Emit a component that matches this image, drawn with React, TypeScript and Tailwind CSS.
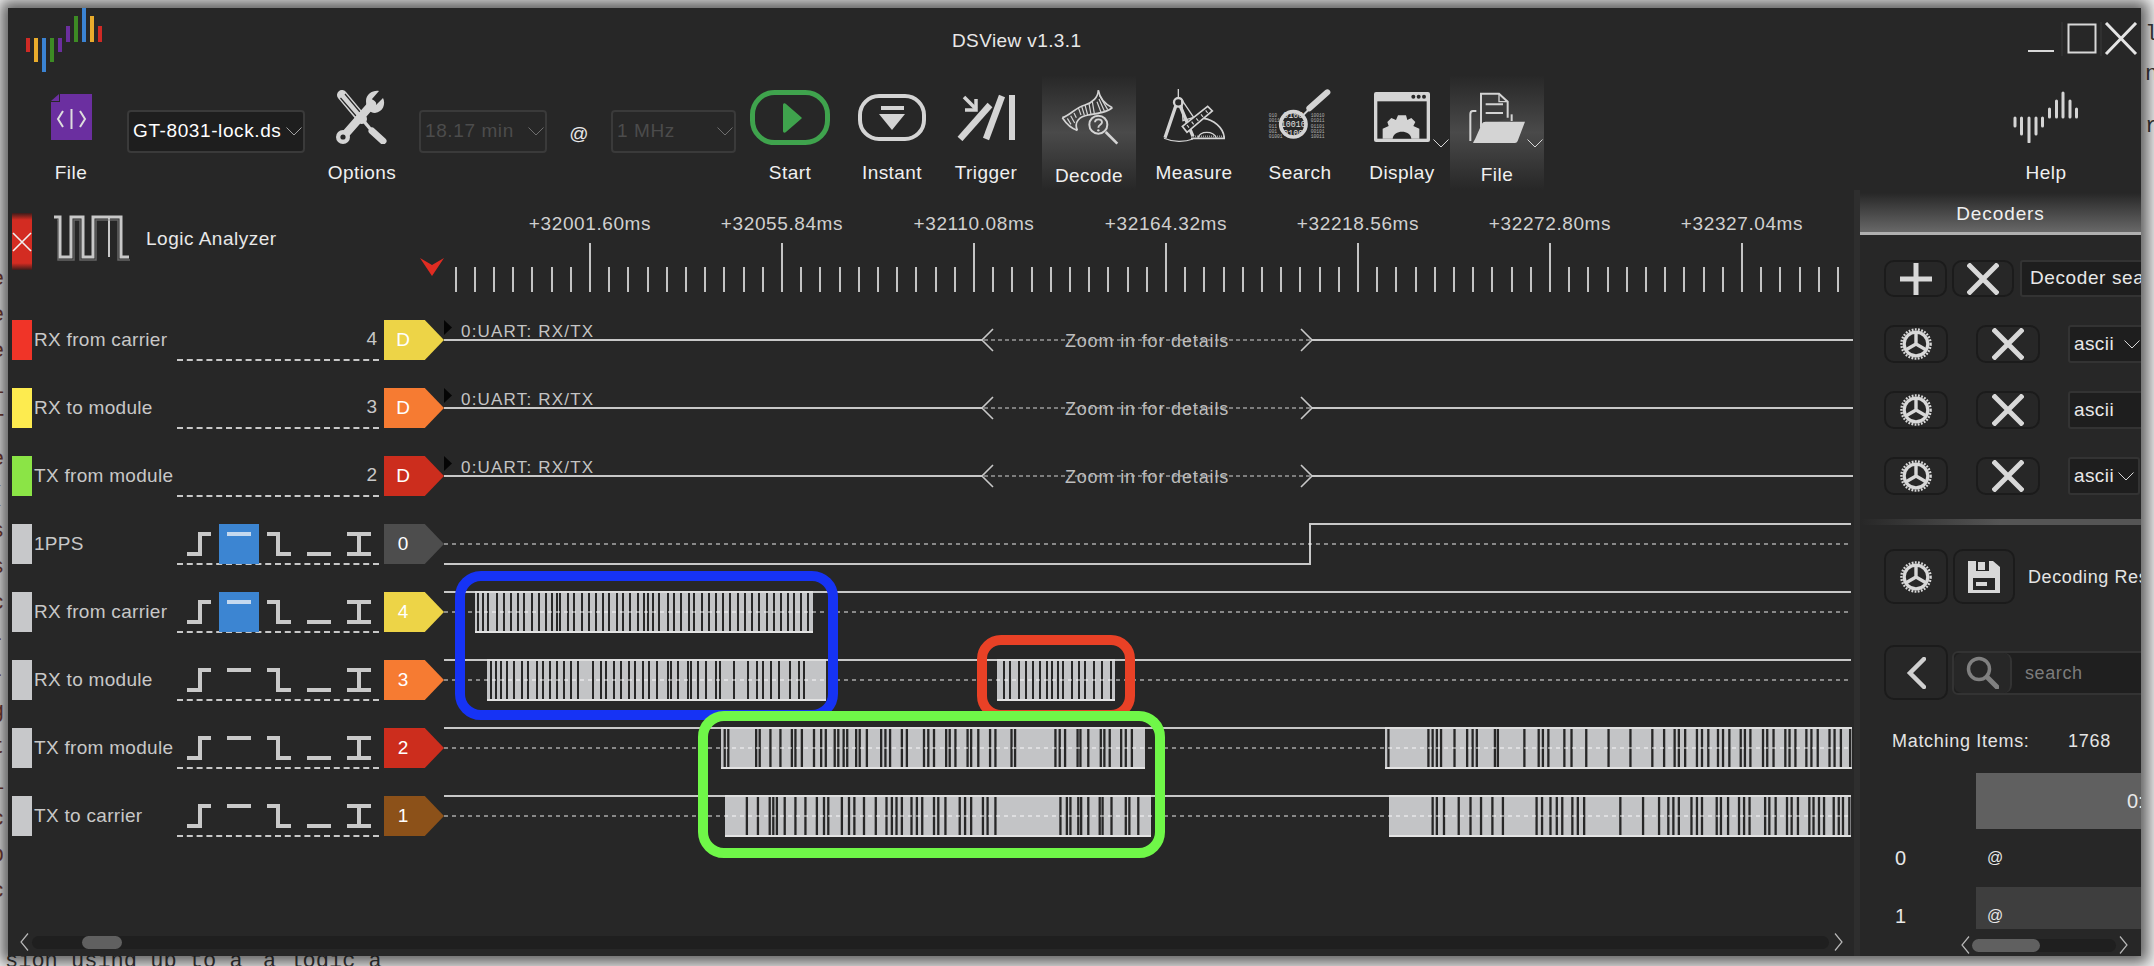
import React from "react";

const Z = (x0: number, s: number, a: number[]) => a.map((v) => x0 + v / s);

type Burst = { a: number; b: number; gaps: number[]; gw: number };
const b = (x0: number, s: number, a: number, e: number, g: number[], gw = 2): Burst => ({
  a: x0 + a / s,
  b: x0 + e / s,
  gaps: Z(x0, s, g),
  gw,
});

const R5 = [b(470, 3, 15, 1029, [22,37,52,77,100,120,140,160,182,203,225,243,257,268,290,310,333,353,375,395,415,437,457,478,500,520,532,545,565,590,610,630,653,670,692,713,735,755,778,800,822,843,865,887,908,930,950,970,990,1010])];
const R6 = [
  b(470, 3, 50, 1067, [60,75,90,107,130,152,172,197,215,238,258,280,300,322,365,390,405,430,450,475,493,515,535,558,590,600,622,650,660,682,705,735,748,790,832,858,875,900,925,958,985,1000]),
  b(680, 2.8, 888, 1218, [905,920,945,965,985,1005,1025,1040,1055,1070,1095,1115,1130,1155,1180,1205]),
];
const R7 = [
  b(680, 2.8, 115, 1302, [122,132,210,220,250,278,310,320,338,372,392,405,430,440,455,465,490,500,520,560,572,585,618,632,680,692,708,742,752,768,802,812,832,865,880,925,935,1048,1060,1075,1110,1118,1140,1175,1185,1200,1232,1245,1262], 2.3),
  b(1200, 2.376, 440, 1550, [445,540,550,560,570,602,632,645,655,698,705,768,802,812,825,863,880,915,968,1020,1072,1100,1125,1135,1150,1178,1190,1205,1228,1240,1255,1282,1292,1305,1335,1345,1360,1388,1398,1412,1438,1450,1465,1493,1505,1520,1542], 2.3),
];
const R8 = [
  b(680, 2.8, 126, 1320, [184,215,248,258,268,290,320,348,380,400,412,450,470,485,512,545,575,590,603,618,645,660,675,708,720,740,780,795,812,845,858,880,1062,1080,1090,1112,1120,1140,1172,1180,1205,1245,1255,1280], 2.3),
  b(1200, 2.376, 449, 1546, [550,560,577,612,640,665,692,717,797,810,830,845,858,882,895,910,996,1050,1088,1110,1122,1135,1165,1178,1190,1225,1235,1252,1278,1290,1303,1340,1350,1365,1392,1403,1418,1445,1455,1468,1480,1503,1515,1525,1540], 2.3),
];

const OFF = 444;
const LINE = "#c8c8c8";

function LogicWave({ bursts }: { bursts: Burst[] }) {
  const segs: [number, number][] = [];
  let p = 444;
  bursts.forEach((k) => {
    segs.push([p, k.a]);
    p = k.b;
  });
  segs.push([p, 1851]);
  return (
    <svg className="block h-[68px] w-full overflow-visible" viewBox="0 0 1410 68">
      {segs.map(([s, e], i) => (
        <rect key={i} x={s - OFF} y={-1} width={e - s} height={2} fill={LINE} shapeRendering="crispEdges" />
      ))}
      {bursts.map((k, i) => (
        <g key={i}>
          <rect x={k.a - OFF} y={0} width={k.b - k.a} height={40} fill="#c3c4c6" shapeRendering="crispEdges" />
          {k.gaps.map((g, j) => (
            <rect key={j} x={k.gw === 2 ? Math.round(g - OFF) : g - OFF} y={1} width={k.gw} height={38} fill="#272727" />
          ))}
          <rect x={k.a - OFF} y={-1} width={k.b - k.a} height={2} fill="#dedede" shapeRendering="crispEdges" />
          <rect x={k.a - OFF} y={39} width={k.b - k.a} height={2} fill="#e2e2e2" shapeRendering="crispEdges" />
        </g>
      ))}
      <line x1={0} x2={1407} y1={20} y2={20} stroke="rgba(255,255,255,0.45)" strokeWidth={2} strokeDasharray="4 4" shapeRendering="crispEdges" />
    </svg>
  );
}

function DecoderWave() {
  return (
    <svg className="block h-[68px] w-full overflow-visible" viewBox="0 0 1410 68">
      <polygon points="0,0 8,7.5 0,15" fill="#050505" />
      <g shapeRendering="crispEdges">
        <rect x={0} y={19} width={538} height={2} fill={LINE} />
        <rect x={868} y={19} width={541} height={2} fill={LINE} />
      </g>
      <line x1={540} x2={866} y1={20} y2={20} stroke="#9a9a9a" strokeWidth={1.5} strokeDasharray="4 3" />
      <path d="M549 9 L538 20 L549 31 M857 9 L868 20 L857 31" fill="none" stroke="#c8c8c8" strokeWidth={1.6} />
      <text x={17} y={17} fontSize={17} fill="#c4c4c4" letterSpacing={1.2}>0:UART: RX/TX</text>
      <text x={703} y={27} fontSize={18} fill="#bdbdbd" textAnchor="middle" letterSpacing={0.85}>Zoom in for details</text>
    </svg>
  );
}

function PpsWave() {
  return (
    <svg className="block h-[68px] w-full overflow-visible" viewBox="0 0 1410 68">
      <path d="M0 40 H866 V0 H1407" fill="none" stroke={LINE} strokeWidth={2} shapeRendering="crispEdges" />
      <line x1={0} x2={1407} y1={20} y2={20} stroke="rgba(255,255,255,0.45)" strokeWidth={2} strokeDasharray="4 4" shapeRendering="crispEdges" />
    </svg>
  );
}

function TrigIcons({ active }: { active?: boolean }) {
  const paths = ["M0 22H13V2H24", "M0 2H24", "M0 2H11V22H24", "M0 22H24", "M0 2H24M0 22H24M12 2V22"];
  return (
    <div className="flex pl-px">
      {paths.map((d, i) => (
        <div key={i} className={"flex h-[40px] w-[40px] items-center justify-center " + (active && i === 1 ? "bg-[#3c85d2]" : "")}>
          <svg width={24} height={24} viewBox="0 0 24 24" fill="none" shapeRendering="crispEdges">
            <path d={d} stroke={active && i === 1 ? "#c5d9ef" : "#c9c9c9"} strokeWidth={4} />
          </svg>
        </div>
      ))}
    </div>
  );
}

type Row = {
  swatch: string;
  name: string;
  num?: string;
  tag: string;
  letter: string;
  kind: "dec" | "pps" | "logic";
  bursts?: Burst[];
  active?: boolean;
};

const ROWS: Row[] = [
  { swatch: "bg-[#f03428]", name: "RX from carrier", num: "4", tag: "bg-[#edd447]", letter: "D", kind: "dec" },
  { swatch: "bg-[#fdeb4f]", name: "RX to module", num: "3", tag: "bg-[#f67b32]", letter: "D", kind: "dec" },
  { swatch: "bg-[#8be446]", name: "TX from module", num: "2", tag: "bg-[#cc2d1d]", letter: "D", kind: "dec" },
  { swatch: "bg-[#c7c8ca]", name: "1PPS", tag: "bg-[#4d4d4d]", letter: "0", kind: "pps", active: true },
  { swatch: "bg-[#c7c8ca]", name: "RX from carrier", tag: "bg-[#edd447]", letter: "4", kind: "logic", bursts: R5, active: true },
  { swatch: "bg-[#c7c8ca]", name: "RX to module", tag: "bg-[#f67b32]", letter: "3", kind: "logic", bursts: R6 },
  { swatch: "bg-[#c7c8ca]", name: "TX from module", tag: "bg-[#cc2d1d]", letter: "2", kind: "logic", bursts: R7 },
  { swatch: "bg-[#c7c8ca]", name: "TX to carrier", tag: "bg-[#8c5119]", letter: "1", kind: "logic", bursts: R8 },
];

function SignalRow({ r }: { r: Row }) {
  return (
    <div className="flex h-[68px] items-start pl-[4px]">
      <div className={"h-[40px] w-[20px] shrink-0 " + r.swatch} />
      <div className="flex h-[40px] w-[145px] shrink-0 items-center pl-[2px] text-[19px] tracking-[0.3px] text-[#c8c8c8] whitespace-nowrap">{r.name}</div>
      <div className="flex h-[41px] w-[202px] shrink-0 items-center justify-end border-b-2 border-dashed border-[#c8c8c8]">
        {r.num ? <span className="pr-[2px] text-[19px] text-[#c8c8c8]">{r.num}</span> : <TrigIcons active={r.active} />}
      </div>
      <div className={"ml-[5px] flex h-[40px] w-[60px] shrink-0 items-center [clip-path:polygon(0_0,68%_0,100%_50%,68%_100%,0_100%)] " + r.tag}>
        <span className="w-[38px] text-center text-[19px] text-white">{r.letter}</span>
      </div>
      <div className="min-w-0 flex-1">
        {r.kind === "dec" ? <DecoderWave /> : r.kind === "pps" ? <PpsWave /> : <LogicWave bursts={r.bursts!} />}
      </div>
    </div>
  );
}

function Caret({ className = "" }: { className?: string }) {
  return (
    <svg className={className} width={16} height={9} viewBox="0 0 16 9" fill="none">
      <path d="M0.5 0.5 L8 8 L15.5 0.5" stroke="#d8d8d8" strokeWidth={1} />
    </svg>
  );
}

function Combo({ w, text, dim, bg }: { w: string; text: string; dim?: boolean; bg?: boolean }) {
  return (
    <div className={"mt-[35px] flex h-[43px] shrink-0 items-center justify-between rounded-[4px] border-2 border-[#3a3a3a] pl-[4px] pr-[1px] text-[19px] tracking-[0.6px] " + w + " " + (bg ? "bg-[#1e1e1e] " : "") + (dim ? "text-[#4c4c4c]" : "text-white")}>
      <span className="whitespace-nowrap">{text}</span>
      <Caret className={dim ? "opacity-40" : "opacity-70"} />
    </div>
  );
}

function Tool({ w, label, icon, hi, labelClass = "", caret, pl = "" }: { w: string; label: string; icon: React.ReactNode; hi?: boolean; labelClass?: string; caret?: boolean; pl?: string }) {
  return (
    <div className={"relative flex h-full shrink-0 flex-col items-center " + w + " " + pl + " " + (hi ? "bg-[linear-gradient(to_bottom,#272727,#4a4a4a_50%,#272727)]" : "")}>
      <div className="flex h-[58px] mt-[13px] items-center justify-center">{icon}</div>
      <div className={"mt-[17px] text-[19px] leading-[20px] tracking-[0.45px] text-[#f0f0f0] " + labelClass}>{label}</div>
      {caret ? <Caret className="absolute right-[1px] top-[64px]" /> : null}
    </div>
  );
}

const C = "#d4d4d4";

const FileIcon = () => (
  <svg width={41} height={46} viewBox="0 0 41 46">
    <path d="M9 0H41V46H0V8H9Z" fill="#6b2fa0" />
    <path d="M0 7L8 0V7Z" fill="#6b2fa0" />
    <path d="M12 17L7 25L12 33M29 17L34 25L29 33M20.5 15V35" stroke="#ddd" strokeWidth={2} fill="none" />
  </svg>
);
const OptionsIcon = () => (
  <svg width={52} height={54} viewBox="0 0 52 54" fill="none">
    <path d="M6 5L26 29" stroke={C} strokeWidth={10} strokeLinecap="round" />
    <path d="M4.5 8L20 26M9 4L24 22" stroke="#272727" strokeWidth={1.2} />
    <path d="M26 29L36 41" stroke={C} strokeWidth={3.5} />
    <path d="M36 41L47 51" stroke={C} strokeWidth={7} strokeLinecap="round" />
    <path d="M7 47L36 14" stroke={C} strokeWidth={8} strokeLinecap="round" />
    <circle cx={7} cy={47} r={7} fill={C} />
    <circle cx={7} cy={47} r={2.6} fill="#272727" />
    <path d="M30 11C30 4 37 0 43 1L36 9L40 15L47 8C50 14 47 22 39 23C33 23 30 18 30 11Z" fill={C} />
  </svg>
);
const StartIcon = () => (
  <svg width={80} height={55} viewBox="0 0 80 55">
    <rect x={2.5} y={2.5} width={75} height={50} rx={22} fill="none" stroke="#3fa34d" strokeWidth={5} />
    <path d="M33 15C33 13 35 13 36 14L51 27C52 28 52 28 51 29L36 42C35 43 33 43 33 41Z" fill="#3fa34d" />
  </svg>
);
const InstantIcon = () => (
  <svg width={68} height={47} viewBox="0 0 68 47">
    <rect x={2} y={2} width={64} height={43} rx={19} fill="none" stroke={C} strokeWidth={4} />
    <rect x={23} y={12} width={23} height={4} fill={C} />
    <path d="M21 20H47L34 36Z" fill={C} />
  </svg>
);
const TriggerIcon = () => (
  <svg width={58} height={47} viewBox="0 0 58 47" fill="none">
    <path d="M7 3L19 15" stroke={C} strokeWidth={3.5} />
    <path d="M19 5V16H8" stroke={C} strokeWidth={3.5} />
    <path d="M45 2L29 45" stroke={C} strokeWidth={6.5} />
    <path d="M33 11L3 45" stroke={C} strokeWidth={6.5} />
    <path d="M55 1V46" stroke={C} strokeWidth={6} />
  </svg>
);
const DecodeIcon = () => (
  <svg width={60} height={60} viewBox="0 0 180 180" fill="none">
    <path d="M10 92C36 84 48 62 78 54C100 48 118 30 118 10" stroke={C} strokeWidth={5} />
    <path d="M55 130C44 104 62 88 88 84C116 80 146 76 160 62" stroke={C} strokeWidth={5} />
    <path d="M118 10C122 32 136 50 160 62" stroke={C} strokeWidth={5} />
    <path d="M10 92C22 110 36 124 55 130" stroke={C} strokeWidth={5} />
    <path d="M25 94L36 112M35 86L47 108M45 78L52 92M66 84L58 62M76 84L68 58M86 84L78 54M96 82L90 50M106 80L100 44M126 76L114 44M136 72L120 36M146 68L122 26" stroke={C} strokeWidth={3.6} />
    <circle cx={118} cy={113} r={27} fill="#474747" stroke={C} strokeWidth={6} />
    <path d="M108 106C108 94 129 94 129 106C129 114 118 113 118 122" stroke={C} strokeWidth={5.5} />
    <circle cx={118} cy={130} r={3.5} fill={C} />
    <path d="M140 135L175 170" stroke={C} strokeWidth={8} />
  </svg>
);
const MeasureIcon = () => (
  <svg width={62} height={56} viewBox="0 0 186 168" fill="none">
    <path d="M46 0V25" stroke={C} strokeWidth={4} />
    <circle cx={46} cy={40} r={13} stroke={C} strokeWidth={7} />
    <path d="M38 52L6 146M52 52L90 142" stroke={C} strokeWidth={10} />
    <path d="M3 148C30 160 65 160 90 150" stroke={C} strokeWidth={3.5} />
    <path d="M56 32L92 85L60 95Z" stroke={C} strokeWidth={4} />
    <path d="M58 112L134 52L148 66L72 130Z" fill="#272727" stroke={C} strokeWidth={5} />
    <path d="M72 108L78 116M86 98L92 106M100 88L106 96M114 76L120 84M128 64L134 72" stroke={C} strokeWidth={3.5} />
    <path d="M84 148H184C182 115 150 92 122 88" stroke={C} strokeWidth={5} />
    <path d="M105 146C112 125 150 125 160 146" stroke={C} strokeWidth={4} />
    <path d="M90 142H182" stroke={C} strokeWidth={5} strokeDasharray="2 4" />
  </svg>
);
const SearchIcon = () => (
  <svg width={64} height={56} viewBox="0 0 192 168" fill="none">
    <g fill="#b0b0b0" fontSize={14} fontFamily="Liberation Mono, monospace">
      <text x={2} y={84}>010</text><text x={2} y={100}>0011</text><text x={2} y={116}>011</text><text x={2} y={132}>001</text><text x={2} y={148}>01001</text>
      <text x={128} y={84}>10010</text><text x={128} y={100}>01011</text><text x={128} y={116}>01101</text><text x={128} y={132}>00101</text><text x={128} y={148}>10011</text>
    </g>
    <g fill="#e2e2e2" fontSize={25} fontFamily="Liberation Mono, monospace">
      <text x={46} y={88}>0100</text><text x={38} y={114}>10010</text><text x={46} y={140}>0100</text>
    </g>
    <circle cx={76} cy={106} r={38} stroke={C} strokeWidth={11} />
    <path d="M104 80L124 60" stroke={C} strokeWidth={6} />
    <path d="M124 58L178 10" stroke={C} strokeWidth={18} strokeLinecap="round" />
  </svg>
);
const DisplayIcon = () => (
  <svg width={56} height={50} viewBox="0 0 168 150">
    <rect x={0} y={0} width={168} height={150} rx={6} fill={C} />
    <rect x={10} y={28} width={148} height={112} fill="#272727" />
    <circle cx={118} cy={14} r={6} fill="#272727" /><circle cx={134} cy={14} r={6} fill="#272727" /><circle cx={150} cy={14} r={6} fill="#272727" />
    <path d="M72 70H96L100 84L112 78L124 90L118 102L136 110V140H26V110L44 102L40 90L52 78L66 84Z" fill={C} />
    <path d="M56 140C58 112 110 112 112 140Z" fill="#272727" />
  </svg>
);
const FolderIcon = () => (
  <svg width={57} height={52} viewBox="0 0 171 156" fill="none">
    <path d="M36 110V8H90L116 32V80" stroke={C} strokeWidth={6} fill="#3c3c3c" />
    <path d="M90 8V32H116" stroke={C} strokeWidth={4} />
    <path d="M50 40H102M50 66H102" stroke={C} strokeWidth={6} />
    <path d="M22 60H12C6 60 4 64 4 70V150" stroke={C} strokeWidth={6} />
    <path d="M128 70V90" stroke={C} strokeWidth={6} />
    <path d="M50 92H168L146 150C144 154 142 156 138 156H12C14 152 18 146 22 136L38 100C40 94 44 92 50 92Z" fill={C} />
  </svg>
);
const HelpIcon = () => (
  <svg width={66} height={52} viewBox="0 0 66 52" fill="none" stroke={C} strokeWidth={3} strokeLinecap="round">
    <path d="M2 27V35M8.5 27V43M16 27V51M23 27V43M29.5 27V35" />
    <path d="M36.5 26V18M43.5 26V10M50 26V2M57 26V10M63.5 26V18" />
  </svg>
);

const Logo = () => {
  const bars: [number, number, number, string][] = [
    [26, 38, 52, "#cf2a25"], [34, 38, 62, "#e9ac2c"], [42, 38, 72, "#3b83d2"], [50, 38, 62, "#3d8b24"], [58, 38, 52, "#6b2f9e"],
    [66, 26, 42, "#6b2f9e"], [74, 16, 42, "#3d8b24"], [82, 8, 42, "#3b83d2"], [90, 16, 42, "#e9ac2c"], [98, 26, 42, "#cf2a25"],
  ];
  return (
    <svg width={80} height={64} viewBox="25 8 80 64" className="shrink-0" shapeRendering="crispEdges">
      {bars.map(([x, a, e, c]) => (
        <rect key={x} x={x} y={a} width={4} height={e - a} fill={c} />
      ))}
    </svg>
  );
};

const WindowControls = () => (
  <div className="flex h-full items-start pt-[14px]">
    <svg width={113} height={34} viewBox="0 0 113 34" fill="none">
      <path d="M0 29H26" stroke="#d8d8d8" strokeWidth={2} />
      <path d="M34 0V34M73 0V34" stroke="#3a3a3a" strokeWidth={1} />
      <rect x={40.5} y={2.5} width={27} height={28} stroke="#d8d8d8" strokeWidth={2} />
      <path d="M78 1L108 32M108 1L78 32" stroke="#e4e4e4" strokeWidth={3} />
    </svg>
  </div>
);

function LogicAnalyzerHead() {
  return (
    <div className="flex w-[412px] shrink-0 items-start pl-[4px] pt-[23px]">
      <div className="flex h-[57px] w-[20px] items-center justify-center bg-[linear-gradient(to_bottom,#3d1c1a,#d32c22_12%,#d32c22_88%,#3d1c1a)]">
        <svg width={20} height={20} viewBox="0 0 20 20" fill="none">
          <path d="M1 1L19 19M19 1L1 19" stroke="#f0f0f0" strokeWidth={1.6} />
        </svg>
      </div>
      <svg width={76} height={46} viewBox="0 0 76 46" fill="none" className="ml-[22px] mt-[2px]">
        <path d="M0 2H6V42H17V2H29V42H39V2H67V42H75" stroke="#c8c8c8" strokeWidth={3} />
        <path d="M55 2V42" stroke="#c8c8c8" strokeWidth={2} />
        <path d="M3 5H4V45H20V5H26V45H42V5H64V45H76" stroke="#8c8c8c" strokeWidth={1.5} opacity={0.6} />
      </svg>
      <div className="ml-[16px] mt-[12px] text-[19px] tracking-[0.5px] text-[#e8e8e8] whitespace-nowrap">Logic Analyzer</div>
    </div>
  );
}

function Ruler() {
  const labels = ["+32001.60ms", "+32055.84ms", "+32110.08ms", "+32164.32ms", "+32218.56ms", "+32272.80ms", "+32327.04ms"];
  const ticks = Array.from({ length: 74 }, (_, i) => i);
  return (
    <div className="min-w-0 flex-1">
      <div className="flex pl-[74px] pt-[24px]">
        {labels.map((l) => (
          <div key={l} className="h-[20px] w-[192px] shrink-0 text-center text-[19px] leading-[20px] tracking-[0.6px] text-[#d0d0d0]">{l}</div>
        ))}
      </div>
      <svg className="mt-[9px] block h-[49px] w-full overflow-visible" viewBox="0 0 1434 49">
        <polygon points="0,15 12,22 24,15 12,33" fill="#e02c22" />
        {ticks.map((i) => {
          const x = Math.round(34.6 + i * 19.2);
          const major = i % 10 === 7;
          return x < 1420 ? <rect key={i} x={x} y={major ? 0 : 24} width={2} height={major ? 49 : 25} fill="#c4c4c4" /> : null;
        })}
      </svg>
    </div>
  );
}

function Scroll({ track, thumb }: { track: string; thumb: string }) {
  return (
    <div className={"h-[13px] rounded-full bg-[#1f1f1f] " + track}>
      <div className={"h-[13px] rounded-full bg-[#606060] " + thumb} />
    </div>
  );
}

const Chev = ({ dir }: { dir: "l" | "r" }) => (
  <svg width={9} height={18} viewBox="0 0 9 18" fill="none" className="shrink-0">
    <path d={dir === "l" ? "M8 0.5L1 9L8 17.5" : "M1 0.5L8 9L1 17.5"} stroke="#b8b8b8" strokeWidth={1.2} />
  </svg>
);

function Btn({ w, h, children }: { w: string; h: string; children: React.ReactNode }) {
  return <div className={"flex shrink-0 items-center justify-center rounded-[10px] border-2 border-[#1b1b1b] " + w + " " + h}>{children}</div>;
}

const XIcon = () => (
  <svg width={32} height={32} viewBox="0 0 32 32" fill="none">
    <path d="M1 1L31 31M31 1L1 31" stroke="#d8d8d8" strokeWidth={5} />
  </svg>
);
const Gear = () => (
  <svg width={32} height={32} viewBox="0 0 32 32" fill="none">
    <circle cx={16} cy={16} r={14.6} stroke="#d8d8d8" strokeWidth={2.4} strokeDasharray="1.8 1.4" />
    <circle cx={16} cy={16} r={11.8} stroke="#d8d8d8" strokeWidth={3.2} />
    <path d="M16 16V5M16 16L6.5 21.5M16 16L25.5 21.5" stroke="#d8d8d8" strokeWidth={3.4} />
  </svg>
);
const Save = () => (
  <svg width={32} height={32} viewBox="0 0 32 32">
    <path d="M0 0H25L32 6V32H0Z" fill="#d8d8d8" />
    <rect x={8} y={0} width={13} height={10} fill="#272727" />
    <rect x={10} y={1} width={7} height={8} fill="#d8d8d8" />
    <rect x={5} y={17} width={22} height={12} fill="#272727" />
    <rect x={8} y={21} width={11} height={4} fill="#d8d8d8" />
  </svg>
);

function DecoderRow({ combo, caret }: { combo: string; caret: string }) {
  return (
    <div className="mt-[28px] flex h-[38px] items-center">
      <Btn w="w-[64px]" h="h-[38px]"><Gear /></Btn>
      <div className="ml-[28px]"><Btn w="w-[64px]" h="h-[38px]"><XIcon /></Btn></div>
      <div className={"ml-[28px] flex h-[38px] shrink-0 items-center rounded-[3px] border-2 border-[#333] bg-[#1e1e1e] pl-[4px] pt-[1px] text-[19px] tracking-[0.4px] text-[#e8e8e8] " + combo}>
        ascii
        <Caret className={caret} />
      </div>
    </div>
  );
}

function Decoders() {
  return (
    <div className="h-full w-[281px] shrink-0 overflow-hidden pt-[3px]">
      <div className="h-[42px] border-b-[3px] border-[#b0b0b0] bg-[linear-gradient(to_bottom,#272727,#686868)] pt-[11px] text-center text-[19px] leading-[20px] tracking-[0.9px] text-[#f0f0f0]">Decoders</div>
      <div className="pl-[24px]">
        <div className="mt-[25px] flex h-[37px] w-[300px] items-center">
          <Btn w="w-[63px]" h="h-[37px]">
            <svg width={32} height={32} viewBox="0 0 32 32"><path d="M0 16H32M16 0V32" stroke="#d8d8d8" strokeWidth={5} /></svg>
          </Btn>
          <div className="ml-[5px]"><Btn w="w-[62px]" h="h-[37px]"><XIcon /></Btn></div>
          <div className="ml-[6px] flex h-[37px] w-[160px] items-center rounded-[3px] border-2 border-[#333] bg-[#1e1e1e] pl-[8px] text-[19px] tracking-[0.6px] text-[#e8e8e8] whitespace-nowrap">Decoder search</div>
        </div>
        <div className="w-[300px]">
          <DecoderRow combo="w-[100px]" caret="ml-[10px]" />
          <DecoderRow combo="w-[100px]" caret="hidden" />
          <DecoderRow combo="w-[72px]" caret="ml-[4px]" />
        </div>
      </div>
      <div className="mt-[24px] h-[6px] bg-[linear-gradient(to_right,#272727,#555_50%)]" />
      <div className="pl-[24px]">
        <div className="mt-[24px] flex h-[55px] w-[300px] items-center">
          <Btn w="w-[64px]" h="h-[55px]"><Gear /></Btn>
          <div className="ml-[5px]"><Btn w="w-[62px]" h="h-[55px]"><Save /></Btn></div>
          <div className="ml-[13px] pt-[2px] text-[18px] tracking-[0.6px] text-[#e4e4e4] whitespace-nowrap">Decoding Results</div>
        </div>
        <div className="mt-[41px] flex h-[55px] w-[300px] items-center">
          <Btn w="w-[64px]" h="h-[55px]">
            <svg width={20} height={32} viewBox="0 0 20 32" fill="none"><path d="M18 2L4 16L18 30" stroke="#d0d0d0" strokeWidth={4.5} strokeLinecap="round" /></svg>
          </Btn>
          <div className="ml-[4px] flex h-[44px] w-[232px] items-center rounded-[6px] border-2 border-[#333] bg-[#1f1f1f]">
            <div className="flex h-[40px] w-[58px] items-center justify-center rounded-[8px] border-r-2 border-[#333] bg-[#272727]">
              <svg width={33} height={33} viewBox="0 0 33 33" fill="none">
                <circle cx={13} cy={13} r={10.5} stroke="#808080" strokeWidth={3.5} />
                <path d="M21 21L31 31" stroke="#808080" strokeWidth={5} strokeLinecap="round" />
              </svg>
            </div>
            <span className="ml-[13px] pt-[2px] text-[18px] tracking-[0.6px] text-[#7c7c7c]">search</span>
          </div>
        </div>
        <div className="mt-[31px] flex h-[20px] items-center pl-[8px] text-[18px] tracking-[0.7px] text-[#e4e4e4]">
          <span className="w-[176px] shrink-0">Matching Items:</span>
          <span>1768</span>
        </div>
      </div>
      <div className="mt-[22px] h-[156px] overflow-hidden pl-[24px] text-[#e8e8e8]">
        <div className="flex h-[56px]">
          <div className="w-[92px] shrink-0" />
          <div className="flex flex-1 items-center bg-[#606060] pl-[151px] text-[20px]">0:</div>
        </div>
        <div className="flex h-[58px] items-center">
          <div className="w-[92px] shrink-0 pl-[11px] text-[20px]">0</div>
          <div className="flex-1 pl-[11px] text-[16px]">@</div>
        </div>
        <div className="flex h-[58px] items-center">
          <div className="w-[92px] shrink-0 pl-[11px] text-[20px]">1</div>
          <div className="flex h-full flex-1 items-center bg-[#3e3e3e] pl-[11px] text-[16px]">@</div>
        </div>
      </div>
      <div className="mt-[7px] flex items-center pl-[101px]">
        <Chev dir="l" />
        <Scroll track="ml-[2px] w-[144px]" thumb="w-[68px]" />
        <div className="ml-[3px]"><Chev dir="r" /></div>
      </div>
    </div>
  );
}

const LEFT = ["e", "e", "e", "i", "T", "e", "(", "s", "s", "c", "-", "-", "g", "t", "1", "c", "b", "c"];

function Backdrop() {
  return (
    <div className="absolute inset-0 overflow-hidden font-['Liberation_Mono',monospace] text-[22px] text-[#3a3a3a]">
      <div className="absolute left-[1025px] top-[-23px] whitespace-nowrap">The second clock of the receiver</div>
      <div className="absolute left-[5px] top-[945px] whitespace-nowrap">sion using up to a</div>
      <div className="absolute left-[263px] top-[945px] whitespace-nowrap">a logic a</div>
      <div className="absolute left-[-9px] top-[262px] flex flex-col text-[#7a4038]">
        {LEFT.map((c, i) => (
          <span key={i} className="h-[36px] leading-[36px]">{c}</span>
        ))}
      </div>
      <div className="absolute left-[2145px] top-[18px] flex flex-col">
        <span className="h-[40px]">l</span><span className="h-[52px]">n</span><span className="h-[40px]">r</span>
      </div>
    </div>
  );
}

export default function App() {
  return (
    <div className="relative h-[966px] w-[2154px] overflow-hidden bg-[#f4f4f4] font-['Liberation_Sans',Arial,sans-serif]">
      <Backdrop />
      <div className="relative ml-[8px] flex h-[948px] w-[2133px] flex-col overflow-hidden bg-[#272727] shadow-[0_0_14px_7px_rgba(0,0,0,0.62)] top-[8px]">
        <div className="flex h-[67px] shrink-0 items-start pl-[17px]">
          <Logo />
          <div className="ml-[847px] mt-[23px] text-[19px] leading-[20px] tracking-[0.4px] text-[#e8e8e8] whitespace-nowrap">DSView v1.3.1</div>
          <div className="ml-auto"><WindowControls /></div>
        </div>

        <div className="flex h-[115px] shrink-0 items-start pl-[15px]">
          <Tool w="w-[96px]" label="File" icon={<FileIcon />} />
          <div className="ml-[8px]"><Combo w="w-[178px]" text="GT-8031-lock.ds" bg /></div>
          <Tool w="w-[114px]" label="Options" icon={<OptionsIcon />} />
          <Combo w="w-[128px]" text="18.17 min" dim />
          <div className="flex h-[86px] w-[64px] shrink-0 items-end justify-center pb-[13px] text-[19px] text-[#e8e8e8]">@</div>
          <Combo w="w-[125px]" text="1 MHz" dim />
          <Tool w="w-[108px]" label="Start" icon={<StartIcon />} />
          <Tool w="w-[96px]" label="Instant" icon={<InstantIcon />} />
          <Tool w="w-[92px]" label="Trigger" icon={<TriggerIcon />} />
          <div className="w-[10px] shrink-0" />
          <Tool w="w-[94px]" label="Decode" icon={<DecodeIcon />} hi labelClass="mt-[20px]" />
          <Tool w="w-[116px]" label="Measure" icon={<MeasureIcon />} />
          <Tool w="w-[96px]" label="Search" icon={<SearchIcon />} />
          <Tool w="w-[102px]" label="Display" icon={<DisplayIcon />} caret pl="pl-[6px]" />
          <Tool w="w-[94px]" label="File" icon={<FolderIcon />} hi caret labelClass="mt-[19px]" />
          <div className="ml-auto"><Tool w="w-[96px]" label="Help" icon={<HelpIcon />} /></div>
          <div className="w-[47px] shrink-0" />
        </div>

        <div className="flex min-h-0 flex-1">
          <div className="flex w-[1846px] shrink-0 flex-col">
            <div className="flex h-[130px] shrink-0">
              <LogicAnalyzerHead />
              <Ruler />
            </div>
            <div className="relative shrink-0">
              {ROWS.map((r, i) => (
                <SignalRow key={i} r={r} />
              ))}
              <div className="absolute left-[447px] top-[251px] h-[149px] w-[383px] rounded-[26px] border-[10px] border-[#1633f5]" />
              <div className="absolute left-[969px] top-[315px] h-[85px] w-[158px] rounded-[24px] border-[10px] border-[#e94126]" />
              <div className="absolute left-[690px] top-[391px] h-[147px] w-[467px] rounded-[26px] border-[10px] border-[#6ff748]" />
            </div>
            <div className="mt-auto mb-[5px] flex items-center pl-[12px]">
              <Chev dir="l" />
              <Scroll track="ml-[3px] w-[1797px] pl-[50px]" thumb="w-[40px]" />
              <div className="ml-[5px]"><Chev dir="r" /></div>
            </div>
          </div>
          <div className="h-full w-[6px] shrink-0 bg-[#2e2e2e]" />
          <Decoders />
        </div>
      </div>
    </div>
  );
}
